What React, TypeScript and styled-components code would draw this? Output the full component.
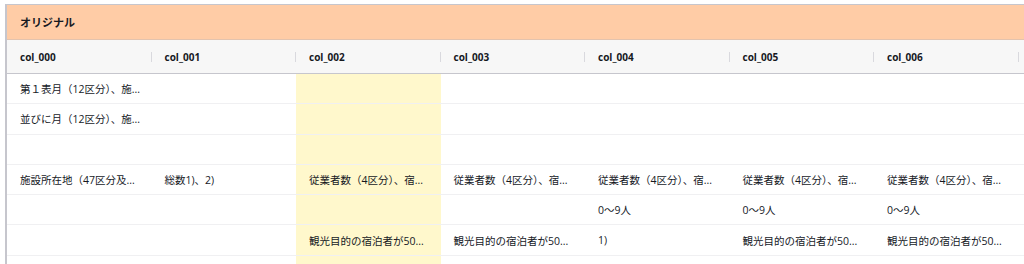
import React from "react";
import styled, { createGlobalStyle } from "styled-components";

const Global = createGlobalStyle`
  html, body { margin: 0; padding: 0; background: #ffffff; }
  body {
    font-family: "Open Sans", "Noto Sans CJK JP", sans-serif;
    color: #16191f;
  }
`;

const Page = styled.div`
  padding: 4px 0 0 5px;
  height: 260px;
  overflow: hidden;
`;

const Panel = styled.div`
  border-top: 1px solid #c6c6cd;
  border-left: 2px solid #c6c6cd;
`;

const TitleBar = styled.div`
  height: 34px;
  background: #ffcca6;
  border-bottom: 1px solid #e3c3ae;
  display: flex;
  align-items: center;
  padding-left: 13px;
  font-size: 11px;
  font-weight: 700;
  color: #16191f;
`;

const Table = styled.table`
  border-collapse: collapse;
  table-layout: fixed;
  width: 100%;
`;

const DataCol = styled.col`
  width: 144.5px;
`;

const RestCol = styled.col`
  width: auto;
`;

const HeadCell = styled.th<{ $sep?: boolean }>`
  position: relative;
  height: 33px;
  padding: 0 8px 0 13px;
  background: #f7f7f7;
  border-bottom: 1px solid #c6c6cd;
  text-align: left;
  font-size: 10px;
  font-weight: 700;
  color: #16191f;
  white-space: nowrap;
  &::after {
    content: "";
    position: absolute;
    right: 0;
    top: 12px;
    height: 10px;
    border-right: 1px solid #d9d9de;
  }
`;

const FillCell = styled.th`
  background: #f7f7f7;
  border-bottom: 1px solid #c6c6cd;
`;

const Row = styled.tr`
  height: 30.3px;
`;

const Cell = styled.td<{ $hl?: boolean }>`
  padding: 0 8px 0 13px;
  background: ${(p) => (p.$hl ? "#fff8cc" : "#ffffff")};
  border-bottom: 1px solid #f0f0f2;
  font-size: 10.5px;
  color: #16191f;
  white-space: nowrap;
  overflow: hidden;
`;

const BlankCell = styled.td`
  background: #ffffff;
  border-bottom: 1px solid #f0f0f2;
`;

const cols = ["col_000", "col_001", "col_002", "col_003", "col_004", "col_005", "col_006"];

const J = "従業者数（4区分）、宿...";
const K = "観光目的の宿泊者が50...";

const rows: string[][] = [
  ["第１表月（12区分）、施...", "", "", "", "", "", ""],
  ["並びに月（12区分）、施...", "", "", "", "", "", ""],
  ["", "", "", "", "", "", ""],
  ["施設所在地（47区分及...", "総数1)、2)", J, J, J, J, J],
  ["", "", "", "", "0〜9人", "0〜9人", "0〜9人"],
  ["", "", K, K, "1)", K, K],
  ["", "", "", "", "", "", ""],
];

export default function App() {
  return (
    <>
      <Global />
      <Page>
        <Panel>
          <TitleBar>オリジナル</TitleBar>
          <Table>
            <colgroup>
              {cols.map((c) => (
                <DataCol key={c} />
              ))}
              <RestCol />
            </colgroup>
            <thead>
              <tr>
                {cols.map((c) => (
                  <HeadCell key={c}>{c}</HeadCell>
                ))}
                <FillCell />
              </tr>
            </thead>
            <tbody>
              {rows.map((r, i) => (
                <Row key={i}>
                  {r.map((v, j) => (
                    <Cell key={j} $hl={j === 2}>
                      {v}
                    </Cell>
                  ))}
                  <BlankCell />
                </Row>
              ))}
            </tbody>
          </Table>
        </Panel>
      </Page>
    </>
  );
}
